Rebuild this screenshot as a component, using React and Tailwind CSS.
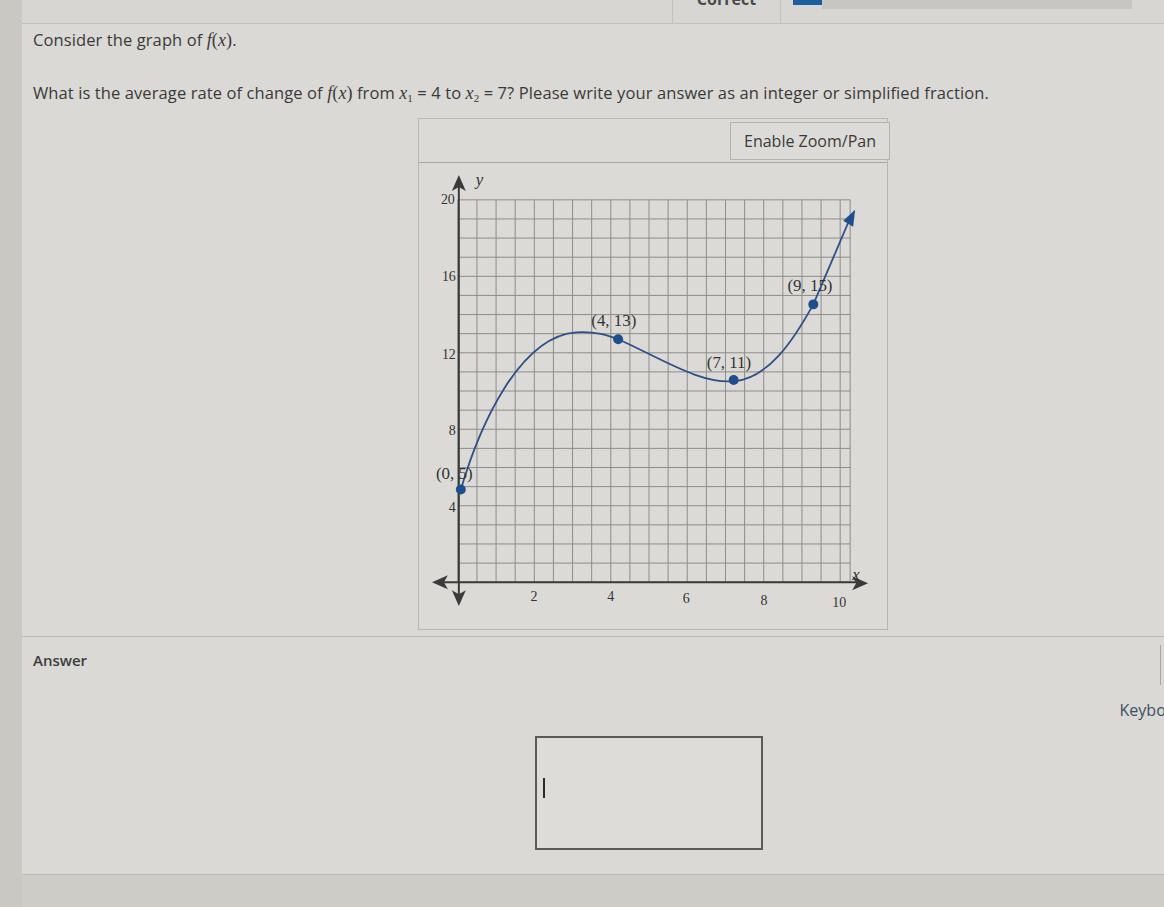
import React from "react";

const font = { fontFamily: '"Open Sans", "Liberation Sans", sans-serif' };

function MathF() {
  return (
    <span className="italic text-[18px]" style={{ fontFamily: '"Liberation Serif", serif' }}>
      f<span className="not-italic">(</span>x<span className="not-italic">)</span>
    </span>
  );
}

function Sub({ v, n }) {
  return (
    <span className="text-[18px]" style={{ fontFamily: '"Liberation Serif", serif' }}>
      <span className="italic">{v}</span>
      <sub className="text-[11px]">{n}</sub>
    </span>
  );
}

function Graph() {
  const vx = [];
  for (let k = 0; k <= 20; k++) vx.push(456 + k * 19.2);
  vx.push(850);
  const hy = [];
  for (let j = 0; j <= 20; j++) hy.push(583 - j * 19.2);
  const lab = { fontFamily: '"Liberation Serif", serif' };
  return (
    <svg width="470" height="468" viewBox="418 162 470 468" className="block">
      {vx.map((x, i) => (
        <line key={"v" + i} x1={x} y1={199} x2={x} y2={583} stroke="#8c8c8a" strokeWidth="1" />
      ))}
      {hy.map((y, i) => (
        <line key={"h" + i} x1={456} y1={y} x2={850} y2={y} stroke="#8c8c8a" strokeWidth="1" />
      ))}
      <line x1="457" y1="186" x2="457" y2="598" stroke="#3a3a3a" strokeWidth="2" />
      <line x1="440" y1="583" x2="858" y2="583" stroke="#3a3a3a" strokeWidth="2" />
      <polygon points="457,174 450,190 457,186 464,190" fill="#3a3a3a" />
      <polygon points="457,607 450,591 457,595 464,591" fill="#3a3a3a" />
      <polygon points="430,583 446,576 442,583 446,590" fill="#3a3a3a" />
      <polygon points="868,584 852,577 856,584 852,591" fill="#3a3a3a" />
      <path
        d="M459,490 C478,425 518,336 575,332 C595,331 606,335 617,339 C660,358 700,385 735,381 C768,377 792,342 813,304 L848,222"
        fill="none"
        stroke="#2f4f86"
        strokeWidth="1.8"
      />
      <polygon points="855,209 843,220 853,226" fill="#1f4e8c" />
      <circle cx="459" cy="490" r="5" fill="#1f4e8c" />
      <circle cx="617" cy="339" r="5" fill="#1f4e8c" />
      <circle cx="733" cy="380" r="5" fill="#1f4e8c" />
      <circle cx="813" cy="304" r="5" fill="#1f4e8c" />
      <g style={lab} fill="#333" fontSize="14">
        <text x="474" y="184" fontStyle="italic" fontSize="17">y</text>
        <text x="439" y="203">20</text>
        <text x="440" y="281">16</text>
        <text x="440" y="359">12</text>
        <text x="447" y="435">8</text>
        <text x="447" y="513">4</text>
        <text x="529" y="602">2</text>
        <text x="606" y="602">4</text>
        <text x="682" y="604">6</text>
        <text x="760" y="606">8</text>
        <text x="832" y="608">10</text>
        <text x="852" y="581" fontStyle="italic" fontSize="17">x</text>
        <g fontSize="17">
          <text x="434" y="479">(0, 5)</text>
          <text x="590" y="326">(4, 13)</text>
          <text x="706" y="368">(7, 11)</text>
          <text x="787" y="291">(9, 15)</text>
        </g>
      </g>
    </svg>
  );
}

export default function App() {
  return (
    <div
      className="w-[1164px] h-[907px] overflow-hidden flex bg-[#dbd9d5] text-[#3a3a3a]"
      style={font}
    >
      <div className="w-[22px] shrink-0 bg-[#c9c8c2]" />
      <div className="flex-1 flex flex-col min-w-0">
        <div className="h-[24px] shrink-0 flex border-b border-[#c3c1bc] bg-[#d8d6d2]">
          <div className="w-[650px] shrink-0" />
          <div className="w-[109px] shrink-0 border-l border-r border-[#c3c1bc] flex justify-center">
            <span className="text-[16px] font-bold text-[#4a4a4a] leading-none -mt-[9px]">Correct</span>
          </div>
          <div className="w-[12px] shrink-0" />
          <div className="w-[29px] h-[5px] bg-[#1d5f9e] shrink-0" />
          <div className="w-[310px] h-[9px] bg-[#c8c6c2] shrink-0" />
        </div>

        <div className="pl-[11px] mt-[6px] text-[16.5px] leading-[20px] tracking-[0.1px]">
          Consider the graph of <MathF />.
        </div>
        <div className="pl-[11px] mt-[33px] text-[16.5px] leading-[20px] whitespace-nowrap tracking-[0.1px]">
          What is the average rate of change of <MathF /> from <Sub v="x" n="1" /> = 4 to{" "}
          <Sub v="x" n="2" /> = 7? Please write your answer as an integer or simplified fraction.
        </div>

        <div className="ml-[396px] mt-[15px] w-[470px] h-[512px] shrink-0 border border-[#b9b7b2] bg-[#dcdad6] flex flex-col">
          <div className="h-[44px] shrink-0 border-b border-[#a9a7a2] flex items-start justify-end pt-[3px]">
            <div className="h-[38px] px-[13px] flex items-center border border-[#b5b3ae] bg-[#dddbd7] text-[16px] text-[#3a3a3a] -mr-[3px]">
              Enable Zoom/Pan
            </div>
          </div>
          <Graph />
        </div>

        <div className="mt-[6px] border-t border-[#b9b7b2] flex-1 flex flex-col">
          <div className="flex justify-between">
            <div className="pl-[11px] pt-[13px] text-[15px] font-semibold text-[#3d3d3d] leading-[20px]">Answer</div>
            <div className="mt-[8px] h-[40px] w-[4px] border-l border-[#a9a7a2]" />
          </div>
          <div className="flex justify-end -mr-[27px] mt-[13px]">
            <span className="text-[16px] text-[#3e4e63]">Keyboard</span>
          </div>
          <div className="ml-[513px] mt-[14px] w-[228px] h-[114px] border-2 border-[#5a5a5a] bg-[#dedcd8] flex items-center pl-[6px]">
            <div className="w-[2px] h-[20px] bg-[#2a2a2a] -mt-[10px]" />
          </div>
          <div className="mt-[24px] flex-1 border-t border-[#bdbbb6] bg-[#cdccc6]" />
        </div>
      </div>
    </div>
  );
}
